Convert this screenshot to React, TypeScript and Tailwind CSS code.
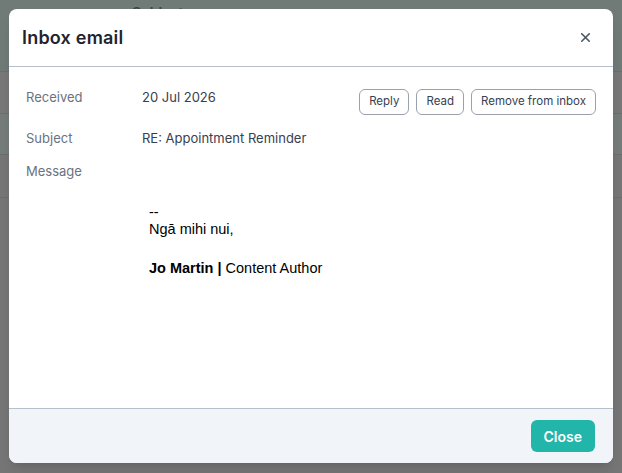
import { X } from "lucide-react";

const sans = "font-['Inter','Noto_Sans',sans-serif]";

function Row({ label, children }: { label: string; children?: React.ReactNode }) {
  return (
    <div className="flex items-start">
      <div className="w-[116px] shrink-0 text-[13px] text-[#6b7280]">{label}</div>
      <div className="flex-1 text-[13px] text-[#374151]">{children}</div>
    </div>
  );
}

export default function App() {
  return (
    <div className={`relative h-[473px] w-[622px] overflow-hidden bg-[#767676] ${sans}`}>
      {/* page underneath the overlay */}
      <div className="flex flex-col">
        <div className="h-[72px] border-b border-[#6a706e] bg-[#707a77] pl-[132px] pt-[2px] text-[14px] font-semibold text-[#3c4442]">
          Subject
        </div>
        <div className="h-[42px] border-b border-[#6a706e] bg-[#787878]" />
        <div className="h-[41px] border-b border-[#6a706e] bg-[#767c7a]" />
        <div className="h-[43px] border-b border-[#6a706e] bg-[#767676]" />
      </div>

      <div className="absolute left-[9px] top-[9px] flex h-[454px] w-[604px] flex-col overflow-hidden rounded-lg bg-white shadow-lg">
        <div className="flex h-[58px] items-center justify-between border-b border-[#b8bfcc] pl-[13px] pr-[20px]">
          <h2 className="text-[18px] font-semibold tracking-[0.2px] text-[#1f2430]">Inbox email</h2>
          <X className="h-[15px] w-[15px] text-[#4b5563]" strokeWidth={2.5} />
        </div>

        <div className="flex flex-1 flex-col px-[17px] pt-[21px]">
          <div className="flex items-start justify-between">
            <div className="flex-1">
              <Row label="Received">20 Jul 2026</Row>
            </div>
            <div className="flex gap-[7px] pt-[1px]">
              <button className="h-[26px] rounded-md border border-[#9aa1ad] px-[9px] text-[11.5px] text-[#374151]">Reply</button>
              <button className="h-[26px] rounded-md border border-[#9aa1ad] px-[9px] text-[11.5px] text-[#374151]">Read</button>
              <button className="h-[26px] rounded-md border border-[#9aa1ad] px-[9px] text-[11.5px] text-[#374151]">Remove from inbox</button>
            </div>
          </div>
          <div className="mt-[14px]">
            <Row label="Subject">RE: Appointment Reminder</Row>
          </div>
          <div className="mt-[13px]">
            <Row label="Message" />
          </div>
          <div className="ml-[123px] mt-[24px] font-['Liberation_Sans',Arial,sans-serif] text-[14.5px] leading-[20px] text-black">
            <div className="leading-[14px]">--</div>
            <div>Ngā mihi nui,</div>
            <div className="h-[19px]" />
            <div>
              <b>Jo Martin |</b> Content Author
            </div>
          </div>
        </div>

        <div className="flex h-[55px] items-center justify-end border-t border-[#b8bfcc] bg-[#f1f4f8] px-[18px]">
          <button className="h-[32px] rounded-md bg-[#22b5aa] px-[13px] text-[14px] font-semibold text-white">
            Close
          </button>
        </div>
      </div>
    </div>
  );
}
